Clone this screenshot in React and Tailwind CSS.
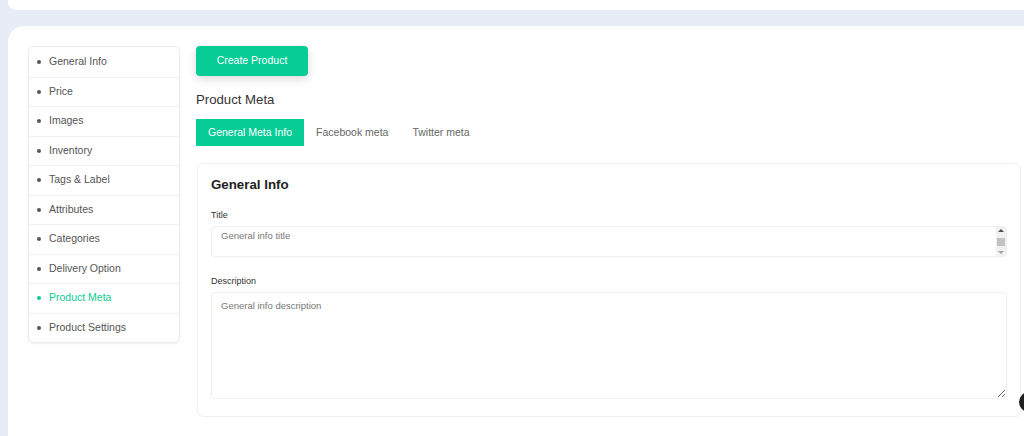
import { useState } from 'react';

const sections = [
  'General Info',
  'Price',
  'Images',
  'Inventory',
  'Tags & Label',
  'Attributes',
  'Categories',
  'Delivery Option',
  'Product Meta',
  'Product Settings',
];

const tabs = ['General Meta Info', 'Facebook meta', 'Twitter meta'];

function App() {
  const [active, setActive] = useState('Product Meta');
  const [tab, setTab] = useState('General Meta Info');

  return (
    <div className="min-h-[436px] h-[436px] overflow-hidden bg-[#e8ecf7] pl-2 font-['Liberation_Sans',Arial,sans-serif] relative">
      <div className="h-[10px] bg-white rounded-bl-lg"></div>

      <div className="mt-4 bg-white rounded-tl-2xl h-[420px] flex pl-5 pt-5 pr-[3px]">
        <div className="w-[152px] shrink-0 self-start border border-[#ebebeb] rounded-md shadow-[0_1px_2px_rgba(0,0,0,0.06)]">
          {sections.map((s, i) => (
            <div
              key={s}
              onClick={() => setActive(s)}
              className={`h-[29.5px] flex items-center pl-[8px] text-[10.5px] cursor-pointer ${i > 0 ? 'border-t border-[#f0f0f0]' : ''} ${active === s ? 'text-[#0ccb94]' : 'text-[#555]'}`}
            >
              <span className={`w-[4px] h-[4px] rounded-full mr-[8px] ${active === s ? 'bg-[#0ccb94]' : 'bg-[#555]'}`}></span>
              {s}
            </div>
          ))}
        </div>

        <div className="flex-1 ml-4">
          <button className="w-[112px] h-[30px] rounded bg-[#06cc95] text-white text-[10.5px] shadow-[0_3px_10px_rgba(0,0,0,0.15)]">
            Create Product
          </button>

          <h3 className="mt-[15px] text-[13.2px] text-[#333] leading-[18px]">Product Meta</h3>

          <div className="flex mt-[10px] h-[27px]">
            {tabs.map((t) => (
              <button
                key={t}
                onClick={() => setTab(t)}
                className={`px-3 text-[10.5px] ${tab === t ? 'bg-[#06cc95] text-white' : 'text-[#666]'}`}
              >
                {t}
              </button>
            ))}
          </div>

          <div className="mt-[17px] ml-px border border-[#efefef] rounded-md px-[13px] pt-[12px] pb-[17px]">
            <h4 className="text-[13.3px] font-bold text-[#222] leading-[18px]">General Info</h4>

            <label className="block mt-[14px] text-[9px] text-[#333] leading-[14px]">Title</label>
            <div className="relative mt-[4px]">
              <textarea
                rows={1}
                placeholder="General info title"
                className="block w-full h-[31px] border border-[#eeeeee] rounded px-[9px] pt-[2px] text-[9.5px] placeholder:text-[#777] resize-none outline-none"
              ></textarea>
              <div className="absolute right-px top-px bottom-px w-[10px] bg-[#f1f1f1] flex flex-col items-center justify-between py-[2px]">
                <span className="w-0 h-0 border-l-[3px] border-r-[3px] border-b-[3px] border-l-transparent border-r-transparent border-b-[#505050]"></span>
                <span className="w-[8px] h-[8px] bg-[#c1c1c1]"></span>
                <span className="w-0 h-0 border-l-[3px] border-r-[3px] border-t-[3px] border-l-transparent border-r-transparent border-t-[#a3a3a3]"></span>
              </div>
            </div>

            <label className="block mt-[17px] text-[9px] text-[#333] leading-[14px]">Description</label>
            <textarea
              placeholder="General info description"
              className="block mt-[4px] w-full h-[107px] border border-[#eeeeee] rounded px-[9px] pt-[6px] text-[9.5px] placeholder:text-[#777] outline-none"
            ></textarea>
          </div>
        </div>
      </div>

      <div className="absolute left-[1019px] top-[392px] w-5 h-5 rounded-full bg-[#1f1f1f]"></div>
    </div>
  );
}

export default App;
